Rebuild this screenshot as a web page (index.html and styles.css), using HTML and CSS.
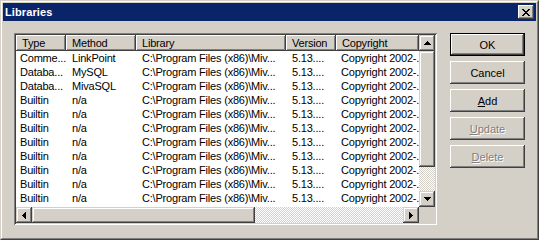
FILE: index.html
```html
<!doctype html>
<html lang="en">
<head>
  <meta charset="utf-8" />
  <title>Libraries</title>
  <link rel="stylesheet" href="styles.css">
</head>
<body>
  <div class="window">
    <div class="frame">
      <div class="titlebar">
        <span class="title">Libraries</span>
        <span class="close">
          <svg width="8" height="7" viewBox="0 0 8 7"><path d="M0 0h2v1H0zM6 0h2v1H6zM1 1h2v1H1zM5 1h2v1H5zM2 2h4v1H2zM3 3h2v1H3zM2 4h4v1H2zM1 5h2v1H1zM5 5h2v1H5zM0 6h2v1H0zM6 6h2v1H6z"/></svg>
        </span>
      </div>

      <div class="content">
        <!-- list view with both scrollbars -->
        <div class="list">
          <div class="view">
            <div class="row head">
              <div class="hcell">Type</div>
              <div class="hcell">Method</div>
              <div class="hcell">Library</div>
              <div class="hcell">Version</div>
              <div class="hcell">Copyright</div>
            </div>
            <div class="row"><div>Comme...</div><div>LinkPoint</div><div>C:\Program Files (x86)\Miv...</div><div>5.13....</div><div>Copyright 2002-.</div></div>
            <div class="row"><div>Databa...</div><div>MySQL</div><div>C:\Program Files (x86)\Miv...</div><div>5.13....</div><div>Copyright 2002-.</div></div>
            <div class="row"><div>Databa...</div><div>MivaSQL</div><div>C:\Program Files (x86)\Miv...</div><div>5.13....</div><div>Copyright 2002-.</div></div>
            <div class="row"><div>Builtin</div><div>n/a</div><div>C:\Program Files (x86)\Miv...</div><div>5.13....</div><div>Copyright 2002-.</div></div>
            <div class="row"><div>Builtin</div><div>n/a</div><div>C:\Program Files (x86)\Miv...</div><div>5.13....</div><div>Copyright 2002-.</div></div>
            <div class="row"><div>Builtin</div><div>n/a</div><div>C:\Program Files (x86)\Miv...</div><div>5.13....</div><div>Copyright 2002-.</div></div>
            <div class="row"><div>Builtin</div><div>n/a</div><div>C:\Program Files (x86)\Miv...</div><div>5.13....</div><div>Copyright 2002-.</div></div>
            <div class="row"><div>Builtin</div><div>n/a</div><div>C:\Program Files (x86)\Miv...</div><div>5.13....</div><div>Copyright 2002-.</div></div>
            <div class="row"><div>Builtin</div><div>n/a</div><div>C:\Program Files (x86)\Miv...</div><div>5.13....</div><div>Copyright 2002-.</div></div>
            <div class="row"><div>Builtin</div><div>n/a</div><div>C:\Program Files (x86)\Miv...</div><div>5.13....</div><div>Copyright 2002-.</div></div>
            <div class="row"><div>Builtin</div><div>n/a</div><div>C:\Program Files (x86)\Miv...</div><div>5.13....</div><div>Copyright 2002-.</div></div>
          </div>

          <div class="vscroll">
            <span class="arrow"><svg width="7" height="4" viewBox="0 0 7 4"><path d="M3 0h1v1h1v1h1v1h1v1H0V3h1V2h1V1h1z"/></svg></span>
            <span class="thumb vthumb"></span>
            <span class="track"></span>
            <span class="arrow"><svg width="7" height="4" viewBox="0 0 7 4"><path d="M0 0h7v1h-1v1h-1v1h-1v1h-1v-1h-1v-1h-1v-1h-1z"/></svg></span>
          </div>

          <div class="hscroll">
            <span class="arrow"><svg width="4" height="7" viewBox="0 0 4 7"><path d="M3 0h1v7h-1v-1h-1v-1h-1v-1h-1v-1h1v-1h1v-1h1z"/></svg></span>
            <span class="thumb hthumb"></span>
            <span class="track"></span>
            <span class="arrow"><svg width="4" height="7" viewBox="0 0 4 7"><path d="M0 0h1v1h1v1h1v1h1v1h-1v1h-1v1h-1v1h-1z"/></svg></span>
          </div>

          <div class="corner"></div>
        </div>

        <div class="buttons">
          <button class="btn default">OK</button>
          <button class="btn">Cancel</button>
          <button class="btn"><u>A</u>dd</button>
          <button class="btn" disabled><u>U</u>pdate</button>
          <button class="btn" disabled><u>D</u>elete</button>
        </div>
      </div>
    </div>
  </div>
</body>
</html>
```

FILE: styles.css
```css
:root{--face:#d4d0c8;--shadow:#808080;--dark:#404040;--title:#0a246a}
*{box-sizing:border-box}
body{margin:0;background:var(--face);font:11px "Liberation Sans",Arial,sans-serif;color:#000}

.window{width:539px;height:240px;border:1px solid;border-color:var(--face) var(--dark) var(--dark) var(--face);background:var(--face)}
.frame{height:100%;border:1px solid;border-color:#fff var(--shadow) var(--shadow) #fff;padding:1px;display:flex;flex-direction:column}

.titlebar{height:18px;background:var(--title);color:#fff;display:flex;align-items:center;justify-content:space-between;padding:0 2px 0 2px}
.title{font-weight:bold;font-size:11px;letter-spacing:0.1px}
.close{width:16px;height:14px;background:var(--face);display:flex;align-items:center;justify-content:center;box-shadow:inset -1px -1px var(--dark),inset 1px 1px #fff,inset -2px -2px var(--shadow)}
.close svg{display:block}

.content{flex:1;display:flex;align-items:flex-start;gap:13px;padding:12px 0 0 11px}

/* sunken list box */
.list{width:423px;height:192px;padding:2px;background:#fff;display:grid;grid-template-columns:1fr 16px;grid-template-rows:1fr 16px;
  box-shadow:inset 1px 1px var(--shadow),inset -1px -1px #fff,inset 2px 2px var(--dark),inset -2px -2px var(--face)}
.view{overflow:hidden;background:#fff;letter-spacing:-0.2px}
.row{display:grid;grid-template-columns:50px 70px 150px 50px 83px;height:14px;line-height:14px}
.row > div{white-space:nowrap;overflow:hidden;padding-left:6px}
.row > div:first-child{padding-left:4px}
.row > div:last-child{padding-left:5px}
.row.head{height:16px;line-height:16px;background:var(--face)}
.row.head > .hcell{padding-left:6px;box-shadow:inset -1px -1px var(--dark),inset 1px 1px #fff,inset -2px -2px var(--shadow)}

.vscroll,.hscroll{display:flex;background:repeating-conic-gradient(#fff 0 25%,var(--face) 0 50%) 0 0/2px 2px}
.vscroll{flex-direction:column}
.arrow,.thumb{flex:none;background:var(--face);box-shadow:inset -1px -1px var(--dark),inset 1px 1px var(--face),inset -2px -2px var(--shadow),inset 2px 2px #fff}
.arrow{width:16px;height:16px;display:flex;align-items:center;justify-content:center}
.arrow svg{display:block}
.track{flex:1}
.vthumb{height:116px}
.hthumb{width:223px}
.corner{background:var(--face)}

.buttons{display:flex;flex-direction:column;gap:5px;width:75px}
.btn{height:23px;padding:0;border:0;background:var(--face);font:inherit;color:#000;
  box-shadow:inset -1px -1px var(--dark),inset 1px 1px #fff,inset -2px -2px var(--shadow)}
.btn.default{box-shadow:inset 0 0 0 1px #000,inset -2px -2px var(--dark),inset 2px 2px #fff,inset -3px -3px var(--shadow)}
.btn:disabled{color:var(--shadow);text-shadow:1px 1px #fff}
```
